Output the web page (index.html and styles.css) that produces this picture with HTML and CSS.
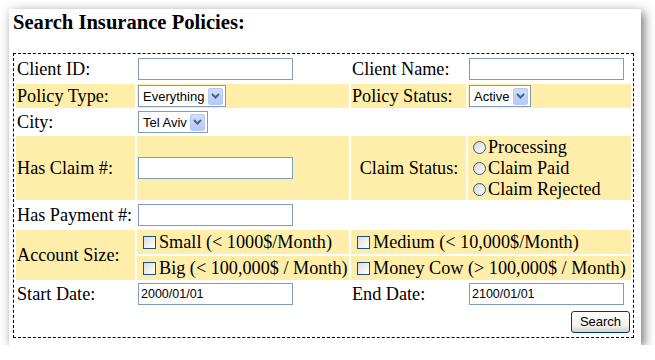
FILE: index.html
```html
<!DOCTYPE html>
<html>
<head>
<meta charset="utf-8">
<link rel="stylesheet" href="styles.css">
</head>
<body>
<div class="card">
  <h1 class="title">Search Insurance Policies:</h1>
  <div class="search-box">
    <table class="form">
      <colgroup><col class="c1"><col class="c2"><col class="c3"><col class="c4"></colgroup>
      <tr class="row-a">
        <td class="label">Client ID:</td>
        <td><input class="text" type="text"></td>
        <td class="label">Client Name:</td>
        <td><input class="text" type="text"></td>
      </tr>
      <tr class="row-b hl">
        <td class="label">Policy Type:</td>
        <td><div class="select select-type"><span>Everything</span><span class="arrow"><svg width="9" height="6" viewBox="0 0 9 6"><path d="M1 1 L4.5 4.5 L8 1" fill="none" stroke="#4D6185" stroke-width="2"/></svg></span></div></td>
        <td class="label">Policy Status:</td>
        <td><div class="select select-status"><span>Active</span><span class="arrow"><svg width="9" height="6" viewBox="0 0 9 6"><path d="M1 1 L4.5 4.5 L8 1" fill="none" stroke="#4D6185" stroke-width="2"/></svg></span></div></td>
      </tr>
      <tr class="row-b">
        <td class="label">City:</td>
        <td><div class="select select-city"><span>Tel Aviv</span><span class="arrow"><svg width="9" height="6" viewBox="0 0 9 6"><path d="M1 1 L4.5 4.5 L8 1" fill="none" stroke="#4D6185" stroke-width="2"/></svg></span></div></td>
        <td></td>
        <td></td>
      </tr>
      <tr class="row-c hl">
        <td class="label">Has Claim #:</td>
        <td><input class="text" type="text"></td>
        <td class="label center">Claim Status:</td>
        <td>
          <div class="options">
            <div class="option"><span class="radio"></span>Processing</div>
            <div class="option"><span class="radio"></span>Claim Paid</div>
            <div class="option"><span class="radio"></span>Claim Rejected</div>
          </div>
        </td>
      </tr>
      <tr class="row-a">
        <td class="label">Has Payment #:</td>
        <td><input class="text" type="text"></td>
        <td></td>
        <td></td>
      </tr>
      <tr class="row-b hl">
        <td class="label" rowspan="2">Account Size:</td>
        <td><div class="option"><span class="check"></span>Small (&lt; 1000$/Month)</div></td>
        <td colspan="2"><div class="option"><span class="check"></span>Medium (&lt; 10,000$/Month)</div></td>
      </tr>
      <tr class="row-b hl">
        <td><div class="option"><span class="check"></span>Big (&lt; 100,000$ / Month)</div></td>
        <td colspan="2"><div class="option"><span class="check"></span>Money Cow (&gt; 100,000$ / Month)</div></td>
      </tr>
      <tr class="row-b">
        <td class="label">Start Date:</td>
        <td><input class="text" type="text" value="2000/01/01"></td>
        <td class="label">End Date:</td>
        <td><input class="text" type="text" value="2100/01/01"></td>
      </tr>
      <tr class="row-d">
        <td class="actions" colspan="4"><button class="btn" type="button">Search</button></td>
      </tr>
    </table>
  </div>
</div>
</body>
</html>
```
FILE: styles.css
```css
html, body {
  margin: 0;
  background: #fff;
}
body {
  font-family: "Liberation Serif", "Times New Roman", serif;
  color: #000;
}
.card {
  margin: 9px 0 0 9px;
  width: 632px;
  height: 336px;
  box-sizing: border-box;
  padding: 1px 7px 0 4px;
  background: #fff;
  box-shadow: 3px 3px 10px rgba(0, 0, 0, 0.55);
}
.title {
  margin: 0 0 19px;
  font: bold 20.6px/24px "Liberation Serif", serif;
}
.search-box {
  border: 1px dashed #000;
}
.form {
  width: 100%;
  table-layout: fixed;
  border-spacing: 2px;
  font-size: 18.2px;
}
.c1 { width: 119px; }
.c2 { width: 212px; }
.c3 { width: 115px; }
.c4 { width: 163px; }
.form td {
  padding: 0 0 0 1px;
  vertical-align: middle;
  white-space: nowrap;
}
.row-a td { height: 26px; }
.row-b td { height: 24px; }
.row-c td { height: 64px; }
.row-d td { height: 27px; }
.hl td { background: #FFEEAA; }
.center { text-align: center; }
.text {
  display: block;
  width: 155px;
  height: 22px;
  box-sizing: border-box;
  margin: 0;
  border: 1px solid #7F9DB9;
  padding: 0 2px;
  font: 12.5px "Liberation Sans", Arial, sans-serif;
  color: #000;
  background: #fff;
  outline: none;
}
.select {
  display: flex;
  align-items: center;
  justify-content: space-between;
  height: 22px;
  box-sizing: border-box;
  border: 1px solid #7F9DB9;
  background: #fff;
  padding: 0 2px 0 4px;
  font: 13px "Liberation Sans", Arial, sans-serif;
}
.select-type { width: 88px; }
.select-status { width: 62px; }
.select-city { width: 70px; }
.arrow {
  display: flex;
  align-items: center;
  justify-content: center;
  width: 15px;
  height: 17px;
  box-sizing: border-box;
  border: 1px solid #B6C9F4;
  border-radius: 2px;
  background: linear-gradient(#D0DEFD, #B4C9F8);
}
.options {
  display: flex;
  flex-direction: column;
}
.option {
  display: flex;
  align-items: center;
  height: 21px;
}
.radio {
  width: 13px;
  height: 13px;
  box-sizing: border-box;
  margin: 0 2px 0 4px;
  border: 1px solid #2B5C8C;
  border-radius: 50%;
  background: linear-gradient(135deg, #D4D4CE, #FFFFFF);
}
.check {
  width: 13px;
  height: 13px;
  box-sizing: border-box;
  margin: 0 3px 0 5px;
  border: 1px solid #1C5180;
  background: linear-gradient(135deg, #DCDCD7, #FFFFFF);
}
.actions {
  text-align: right;
}
.btn {
  width: 59px;
  height: 22px;
  margin: 0 1px 0 0;
  padding: 0;
  border: 1px solid #003C74;
  border-radius: 3px;
  background: linear-gradient(#FFFFFF, #F3F2EE 70%, #D6D0C5);
  font: 13px "Liberation Sans", Arial, sans-serif;
  color: #000;
}
```
